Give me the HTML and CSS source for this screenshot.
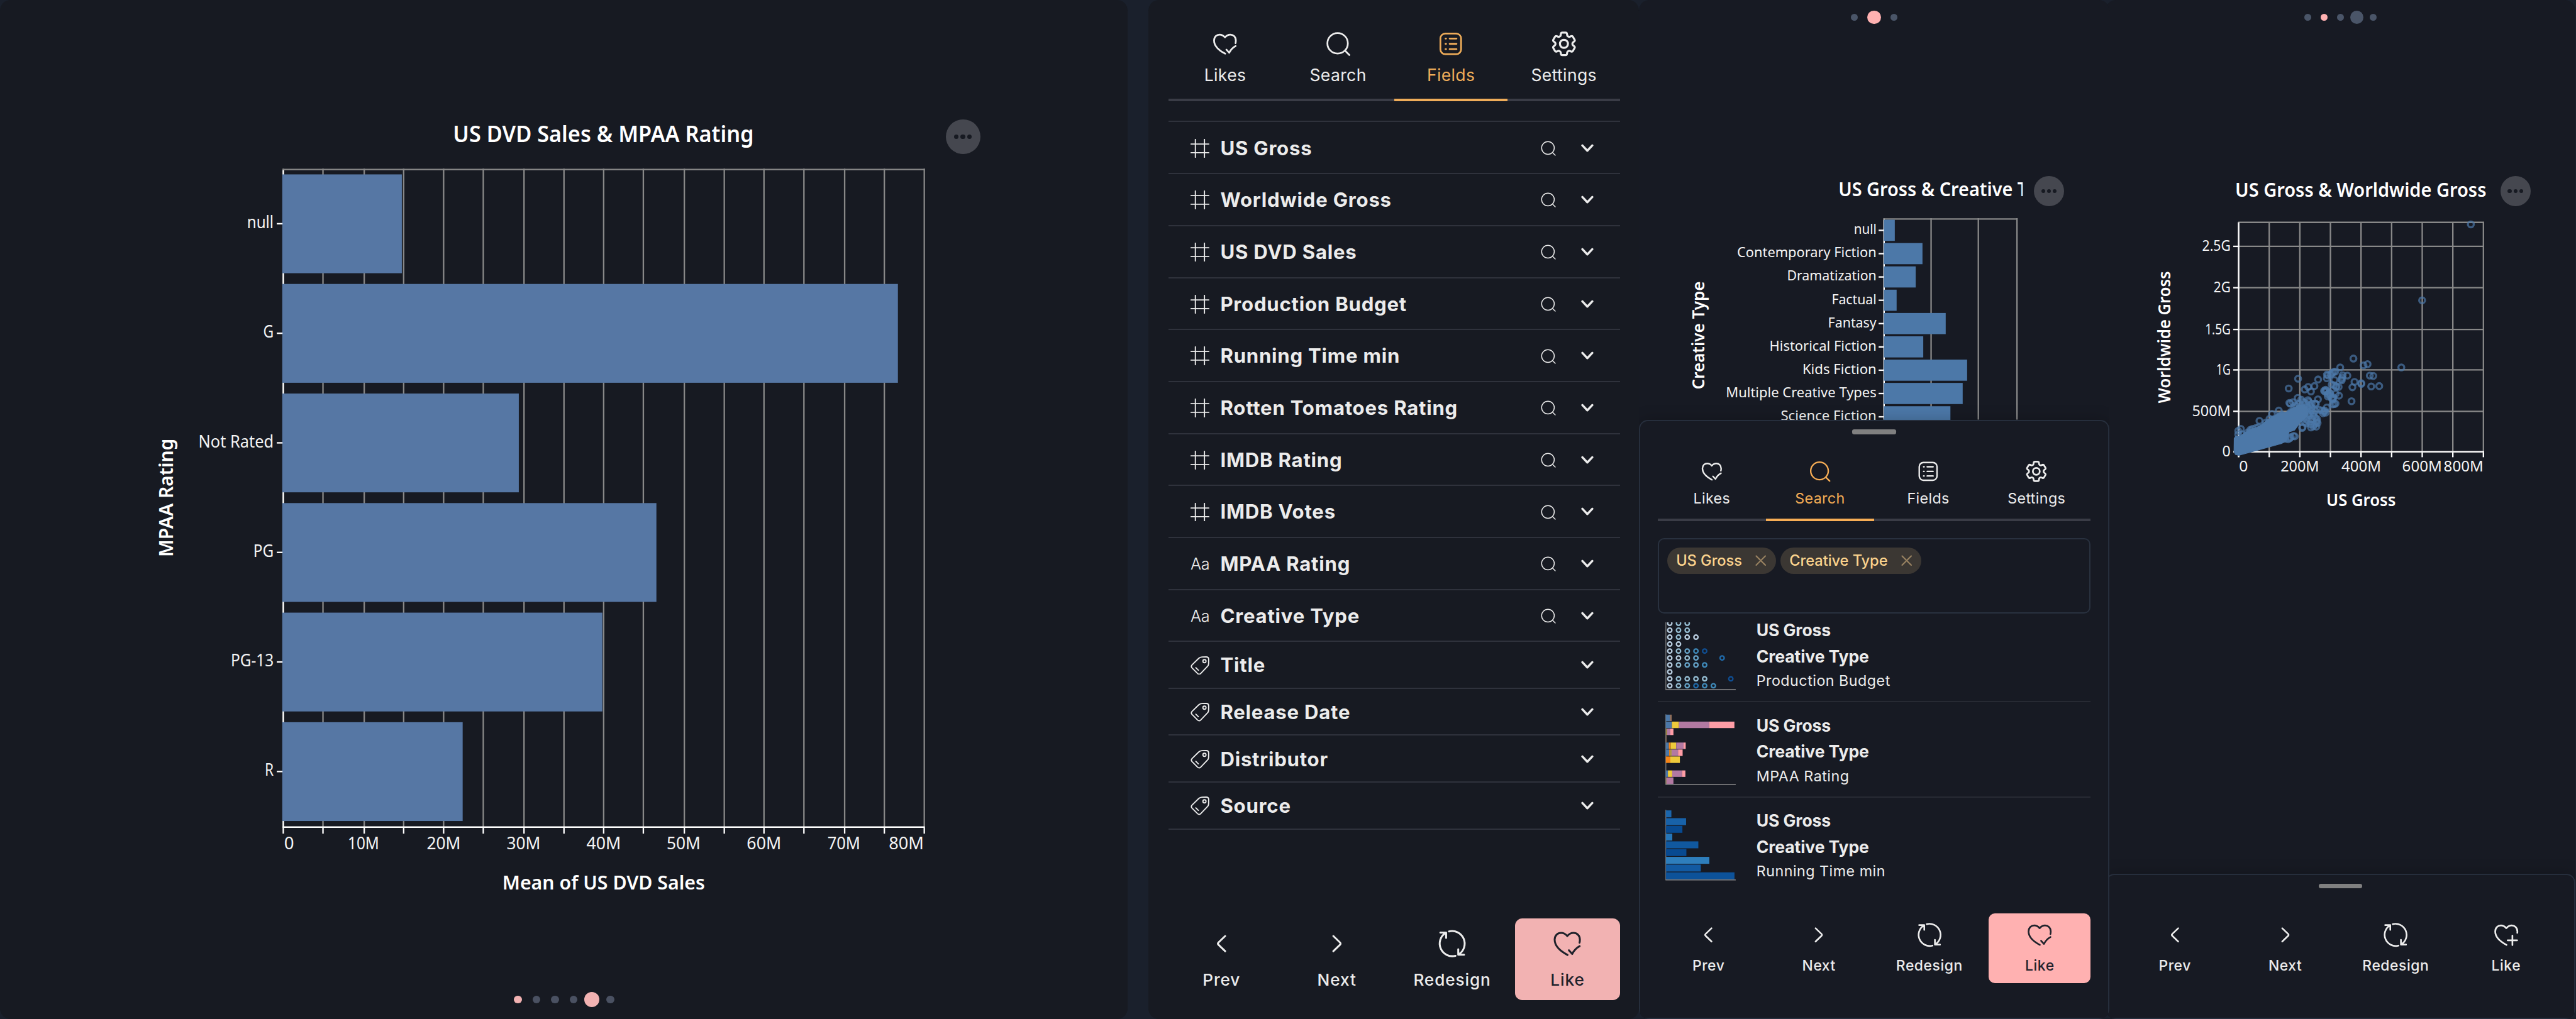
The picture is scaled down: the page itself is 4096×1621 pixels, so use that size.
FILE: index.html
```html
<!DOCTYPE html>
<html lang="en">
<head>
<meta charset="utf-8">
<title>Movies charts</title>
<link rel="stylesheet" href="styles.css">
</head>
<body>
<svg class="sprite" aria-hidden="true">
  <symbol id="i-heart-check" viewBox="0 0 24 24"><path d="M12.2 21C6.5 18 2 14.3 2 8.9 2 5.5 4.4 3.5 7.1 3.5 9.2 3.5 10.6 4.3 12 6 13.4 4.3 14.8 3.5 16.9 3.5 19.6 3.5 22 5.5 22 8.9c0 .9-.1 1.700-.3 2.400M13.300 17.300l2.600 2.900Q18 16 21.800 14"/></symbol>
  <symbol id="i-heart-plus" viewBox="0 0 24 24"><path d="M12.200 21C6.500 18 2 14.300 2 8.900 2 5.500 4.400 3.500 7.100 3.500 9.200 3.500 10.600 4.300 12 6 13.400 4.300 14.800 3.500 16.900 3.500 19.600 3.500 22 5.500 22 8.900c0 .5 0 .9-.1 1.300M17.500 12.600v8.600M13.200 16.900h8.600"/></symbol>
  <symbol id="i-search" viewBox="0 0 24 24"><circle cx="11.500" cy="11.500" r="9.400"/><path d="M18.400 18.400L22.300 22.300"/></symbol>
  <symbol id="i-list" viewBox="0 0 24 24"><rect x="2.500" y="2.500" width="19" height="19" rx="4.500"/><path d="M7.200 7.100h.5M11 7.100h6.300M7.200 12h.5M11 12h6.300M7.200 16.900h.5M11 16.900h6.300"/></symbol>
  <symbol id="i-gear" viewBox="1.600 1.600 20.800 20.800"><path d="M9.594 3.940c.09-.542.56-.94 1.110-.94h2.593c.55 0 1.020.398 1.110.94l.213 1.281c.063.374.313.686.645.87.074.04.147.083.22.127.325.196.72.257 1.075.124l1.217-.456a1.125 1.125 0 0 1 1.370.49l1.296 2.247a1.125 1.125 0 0 1-.26 1.431l-1.003.827c-.293.241-.438.613-.43.992a7.723 7.723 0 0 1 0 .255c-.008.378.137.75.43.991l1.004.827c.424.35.534.955.26 1.430l-1.298 2.247a1.125 1.125 0 0 1-1.369.491l-1.217-.456c-.355-.133-.75-.072-1.076.124a6.470 6.470 0 0 1-.22.128c-.331.183-.581.495-.644.869l-.213 1.281c-.09.543-.56.94-1.110.94h-2.594c-.55 0-1.019-.398-1.110-.94l-.213-1.281c-.062-.374-.312-.686-.644-.87a6.520 6.520 0 0 1-.22-.127c-.325-.196-.72-.257-1.076-.124l-1.217.456a1.125 1.125 0 0 1-1.369-.49l-1.297-2.247a1.125 1.125 0 0 1 .26-1.431l1.004-.827c.292-.24.437-.613.43-.991a6.932 6.932 0 0 1 0-.255c.007-.38-.138-.751-.43-.992l-1.004-.827a1.125 1.125 0 0 1-.26-1.430l1.297-2.247a1.125 1.125 0 0 1 1.370-.491l1.216.456c.356.133.751.072 1.076-.124.072-.044.146-.086.22-.128.332-.183.582-.495.644-.869l.214-1.280Z"/><circle cx="12" cy="12" r="3.200"/></symbol>
  <symbol id="i-left" viewBox="0 0 24 24"><path d="M15 6L9.700 11.100Q8.800 12 9.700 12.900L15 18"/></symbol>
  <symbol id="i-right" viewBox="0 0 24 24"><path d="M9 6L14.300 11.100Q15.200 12 14.300 12.900L9 18"/></symbol>
  <symbol id="i-redo" viewBox="0 0 24 24"><path d="M9.400 2.340A10 10 0 0 1 17.200 20.500M16.800 16.500v4.300h4.600M14.600 21.660A10 10 0 0 1 6.800 3.500M7.200 7.500V3.200H2.600"/></symbol>
  <symbol id="i-hash" viewBox="0 0 24 24"><path d="M6.200 .6V23.400M17.800 .6V23.400M.6 6.500H23.400M.6 17.600H23.400"/></symbol>
  <symbol id="i-tag" viewBox="0 0 24 24"><path d="M14.500 .9L20 .8Q23.200 .8 23.200 4L23.100 9.500Q23 11.500 21.600 13L13 21.900Q11 23.900 9 22L2 15Q.1 13 2 10.900L10.500 2.600Q12.200 1 14.500 .9ZM6.800 14.500l3.200 3.200"/><circle cx="17.800" cy="6.200" r="2"/></symbol>
  <symbol id="i-down" viewBox="0 0 24 24"><path d="M2.500 6.500L12 16.500 21.500 6.500"/></symbol>
  <symbol id="i-x" viewBox="0 0 24 24"><path d="M2 2L22 22M22 2L2 22"/></symbol>
</svg>

<main class="board">
  <section class="panel chart-panel">
    <svg class="chart" id="ratingChart" viewBox="0 0 2159 1952"></svg>
    <button class="more more-wide"><i></i><i></i><i></i></button>
    <div class="pager pager-bottom"><i class="liked"></i><i></i><i></i><i></i><i class="liked big"></i><i></i></div>
  </section>

  <section class="panel fields-panel">
    <nav class="tabs">
      <a class="tab"><svg class="icon"><use href="#i-heart-check"/></svg><span>Likes</span></a>
      <a class="tab"><svg class="icon"><use href="#i-search"/></svg><span>Search</span></a>
      <a class="tab active"><svg class="icon"><use href="#i-list"/></svg><span>Fields</span></a>
      <a class="tab"><svg class="icon"><use href="#i-gear"/></svg><span>Settings</span></a>
    </nav>
    <ul class="fields">
      <li><svg class="kind"><use href="#i-hash"/></svg><b>US Gross</b><svg class="find"><use href="#i-search"/></svg><svg class="open"><use href="#i-down"/></svg></li>
      <li><svg class="kind"><use href="#i-hash"/></svg><b>Worldwide Gross</b><svg class="find"><use href="#i-search"/></svg><svg class="open"><use href="#i-down"/></svg></li>
      <li><svg class="kind"><use href="#i-hash"/></svg><b>US DVD Sales</b><svg class="find"><use href="#i-search"/></svg><svg class="open"><use href="#i-down"/></svg></li>
      <li><svg class="kind"><use href="#i-hash"/></svg><b>Production Budget</b><svg class="find"><use href="#i-search"/></svg><svg class="open"><use href="#i-down"/></svg></li>
      <li><svg class="kind"><use href="#i-hash"/></svg><b>Running Time min</b><svg class="find"><use href="#i-search"/></svg><svg class="open"><use href="#i-down"/></svg></li>
      <li><svg class="kind"><use href="#i-hash"/></svg><b>Rotten Tomatoes Rating</b><svg class="find"><use href="#i-search"/></svg><svg class="open"><use href="#i-down"/></svg></li>
      <li><svg class="kind"><use href="#i-hash"/></svg><b>IMDB Rating</b><svg class="find"><use href="#i-search"/></svg><svg class="open"><use href="#i-down"/></svg></li>
      <li><svg class="kind"><use href="#i-hash"/></svg><b>IMDB Votes</b><svg class="find"><use href="#i-search"/></svg><svg class="open"><use href="#i-down"/></svg></li>
      <li><span class="kind letters">Aa</span><b>MPAA Rating</b><svg class="find"><use href="#i-search"/></svg><svg class="open"><use href="#i-down"/></svg></li>
      <li><span class="kind letters">Aa</span><b>Creative Type</b><svg class="find"><use href="#i-search"/></svg><svg class="open"><use href="#i-down"/></svg></li>
      <li class="short"><svg class="kind"><use href="#i-tag"/></svg><b>Title</b><svg class="open"><use href="#i-down"/></svg></li>
      <li class="short"><svg class="kind"><use href="#i-tag"/></svg><b>Release Date</b><svg class="open"><use href="#i-down"/></svg></li>
      <li class="short"><svg class="kind"><use href="#i-tag"/></svg><b>Distributor</b><svg class="open"><use href="#i-down"/></svg></li>
      <li class="short"><svg class="kind"><use href="#i-tag"/></svg><b>Source</b><svg class="open"><use href="#i-down"/></svg></li>
    </ul>
    <div class="actions">
      <button class="action"><svg class="icon"><use href="#i-left"/></svg><span>Prev</span></button>
      <button class="action"><svg class="icon"><use href="#i-right"/></svg><span>Next</span></button>
      <button class="action"><svg class="icon"><use href="#i-redo"/></svg><span>Redesign</span></button>
      <button class="action on"><svg class="icon"><use href="#i-heart-check"/></svg><span>Like</span></button>
    </div>
  </section>

  <section class="panel phone phone-search">
    <div class="canvas">
      <svg class="chart" id="typeChart" viewBox="3139 0 900 804"></svg>
      <button class="more"><i></i><i></i><i></i></button>
      <div class="pager"><i></i><i class="liked big"></i><i></i></div>
    </div>
    <div class="sheet">
      <div class="handle"></div>
      <nav class="tabs">
        <a class="tab"><svg class="icon"><use href="#i-heart-check"/></svg><span>Likes</span></a>
        <a class="tab active"><svg class="icon"><use href="#i-search"/></svg><span>Search</span></a>
        <a class="tab"><svg class="icon"><use href="#i-list"/></svg><span>Fields</span></a>
        <a class="tab"><svg class="icon"><use href="#i-gear"/></svg><span>Settings</span></a>
      </nav>
      <div class="query">
        <span class="chip chip-a"><em>US Gross</em><svg><use href="#i-x"/></svg></span>
        <span class="chip chip-b"><em>Creative Type</em><svg><use href="#i-x"/></svg></span>
      </div>
      <div class="results">
        <article><svg class="thumb" id="thumbBudget" viewBox="3189 1185.700 136 136"></svg><div><b>US Gross</b><b>Creative Type</b><span>Production Budget</span></div></article>
        <article><svg class="thumb" id="thumbRating" viewBox="3189 1368 136 136"></svg><div><b>US Gross</b><b>Creative Type</b><span>MPAA Rating</span></div></article>
        <article><svg class="thumb" id="thumbTime" viewBox="3189 1550.300 136 136"></svg><div><b>US Gross</b><b>Creative Type</b><span>Running Time min</span></div></article>
      </div>
      <div class="actions">
        <button class="action"><svg class="icon"><use href="#i-left"/></svg><span>Prev</span></button>
        <button class="action"><svg class="icon"><use href="#i-right"/></svg><span>Next</span></button>
        <button class="action"><svg class="icon"><use href="#i-redo"/></svg><span>Redesign</span></button>
        <button class="action on"><svg class="icon"><use href="#i-heart-check"/></svg><span>Like</span></button>
      </div>
    </div>
  </section>

  <section class="panel phone phone-scatter">
    <div class="canvas">
      <svg class="chart" id="grossChart" viewBox="4032 0 900 1674"></svg>
      <button class="more"><i></i><i></i><i></i></button>
      <div class="pager pager-five"><i></i><i class="liked"></i><i></i><i class="big"></i><i></i></div>
    </div>
    <div class="sheet">
      <div class="handle"></div>
      <div class="actions">
        <button class="action"><svg class="icon"><use href="#i-left"/></svg><span>Prev</span></button>
        <button class="action"><svg class="icon"><use href="#i-right"/></svg><span>Next</span></button>
        <button class="action"><svg class="icon"><use href="#i-redo"/></svg><span>Redesign</span></button>
        <button class="action"><svg class="icon"><use href="#i-heart-plus"/></svg><span>Like</span></button>
      </div>
    </div>
  </section>
</main>
<script src="charts.js"></script>
</body>
</html>
```
FILE: styles.css
```css
/* 1rem is ten design pixels of the 4933px wide board */
html { font-size: calc(100vw / 493.3); }
* { box-sizing: border-box; }
body {
  margin: 0;
  background: #1a202c;
  color: #ececec;
  font-family: Inter, "Liberation Sans", sans-serif;
  overflow: hidden;
}
ul { list-style: none; margin: 0; padding: 0; }
button { border: 0; background: none; color: inherit; font: inherit; padding: 0; }
.sprite { position: absolute; width: 0; height: 0; }
svg { fill: none; }
use, .icon, .kind, .find, .open, .chip svg {
  stroke: currentColor;
  stroke-linecap: round;
  stroke-linejoin: round;
}

.board { display: flex; width: 493.3rem; height: 100vh; }
.panel { position: relative; flex: none; background: #171a22; border-radius: 2rem; overflow: hidden; }
.chart-panel { width: 215.9rem; margin-right: 4rem; }
.fields-panel { width: 94rem; padding: 5.85rem 3.6rem 3.6rem 3.9rem; display: flex; flex-direction: column; }
.phone { width: 90rem; background: #171a23; display: flex; flex-direction: column; }
.phone-search { z-index: 1; }
.phone-scatter { margin-left: -.7rem; }
.canvas { position: relative; flex: none; }
.phone-search .canvas { height: 80.4rem; }
.phone-scatter .canvas { height: 167.4rem; }
.chart { display: block; width: 100%; height: 100%; }

/* chart drawing */
.chart text { font-family: "Noto Sans", sans-serif; fill: #f4f4f4; }
.chart .bold { font-weight: 600; fill: #fff; }
.grid { stroke: #888; stroke-width: 2.8; }
.axis { stroke: #fff; stroke-width: 2.8; }

/* page dots */
.pager { position: absolute; top: 1.95rem; left: 0; width: 100%; height: 2.8rem; display: flex; justify-content: center; align-items: center; gap: 2.43rem; }
.pager i { width: 1.32rem; height: 1.32rem; border-radius: 50%; background: #4a5568; }
.pager .liked { background: #ffb1b1; }
.pager .big { width: 2.55rem; height: 2.55rem; margin: 0 -.6rem; }
.pager-five { gap: 1.83rem; }
.pager-bottom { top: 190rem; gap: 2.04rem; }
.pager-bottom { width: 216.1rem; height: 3rem; }
.pager-bottom i { width: 1.5rem; height: 1.5rem; background: #4a5162; }
.pager-bottom .liked { background: #f2b2b2; }
.pager-bottom .big { width: 2.95rem; height: 2.95rem; margin: 0 -.72rem; }

/* overflow menu over a chart */
.more { position: absolute; top: 33.7rem; left: 75.6rem; width: 5.8rem; height: 5.8rem; border-radius: 50%; background: #45474f; display: flex; align-items: center; justify-content: center; gap: .35rem; }
.more i { width: .75rem; height: .75rem; border-radius: 50%; background: #171a22; }
.more-wide { top: 22.9rem; left: 181.1rem; width: 6.6rem; height: 6.6rem; gap: .37rem; }
.more-wide i { width: .9rem; height: .9rem; }

/* tabs */
.tabs { display: grid; grid-template-columns: repeat(4, 1fr); }
.tab { display: flex; flex-direction: column; align-items: center; gap: 1.53rem; padding-bottom: 2.52rem; border-bottom: 4px solid #3a3c46; font-size: 3.2rem; line-height: 4rem; letter-spacing: .013em; }
.tab .icon { width: 5rem; height: 5rem; stroke-width: 1.6; }
.tab.active { color: #eeac59; border-color: #eeac59; }

/* field list */
.fields { margin-top: 3.8rem; border-top: 2px solid #2f323c; }
.fields li { display: flex; align-items: center; height: 9.96rem; padding: .2rem 5.1rem 0 4.2rem; border-bottom: 2px solid #2f323c; }
.fields .short { height: 8.98rem; }
.fields b { flex: 1; font-size: 3.75rem; font-weight: 650; letter-spacing: .025em; }
.kind { width: 3.6rem; height: 3.6rem; margin-right: 2.1rem; stroke-width: 1.5; }
.letters { font-size: 3.05rem; font-weight: 300; line-height: 3.6rem; letter-spacing: -.02em; white-space: nowrap; }
.find { width: 3.1rem; height: 3.1rem; margin-right: 4.8rem; stroke-width: 1.4; }
.open { width: 2.4rem; height: 2.4rem; stroke-width: 4.2; }
.open { stroke-linecap: butt; }

/* action buttons */
.actions { display: grid; grid-template-columns: repeat(4, 1fr); gap: 1.86rem; margin-top: auto; }
.action { height: 15.7rem; padding-top: 1.95rem; display: flex; flex-direction: column; align-items: center; gap: 2.05rem; border-radius: 1.4rem; font-size: 3.15rem; line-height: 4rem; font-weight: 550; letter-spacing: .035em; }
.action .icon { width: 5.8rem; height: 5.8rem; stroke-width: 1.5; }
.action.on { background: #f2b2b2; color: #1f222b; }

/* bottom sheets of the phone panels */
.sheet { position: relative; flex: 1; display: flex; flex-direction: column; padding: 0 3.3rem; border: 2px solid #262e3c; border-radius: 1.7rem 1.7rem 0 0; background: #171a23; box-shadow: 0 0 3rem rgba(0, 0, 0, .22); }
.handle { flex: none; align-self: center; width: 8.4rem; height: .9rem; margin-top: 1.65rem; border-radius: .4rem; background: #808080; }
.sheet .tabs { margin-top: 4.95rem; }
.sheet .tab { gap: 1.23rem; padding-bottom: 2.05rem; font-size: 2.8rem; line-height: 3.6rem; letter-spacing: .016em; }
.sheet .tab .icon { width: 4.3rem; height: 4.3rem; }
.sheet .tab.active { color: #f6ad55; border-color: #f6ad55; }
.query { flex: none; height: 14.45rem; margin-top: 3.25rem; padding: 1.6rem; border: 2px solid #29313f; border-radius: 1.2rem; display: flex; align-items: flex-start; gap: .9rem; }
.chip { height: 5.06rem; padding: 0 1.85rem 0 1.7rem; border-radius: 2.53rem; display: flex; align-items: center; justify-content: space-between; background: #3b3733; color: #fbd38d; }
.chip-a { width: 20.8rem; }
.chip-b { width: 27rem; }
.chip em { font-style: normal; font-size: 2.85rem; font-weight: 500; letter-spacing: -.003em; white-space: nowrap; }
.chip svg { width: 2.1rem; height: 2.1rem; stroke-width: 2.8; color: #9b8462; }
.results { flex: none; height: 51rem; margin-top: 1.7rem; overflow: hidden; }
.results article { display: flex; gap: 3.8rem; height: 18.23rem; padding: 2rem 0 0 1.5rem; border-bottom: 2px solid #272a33; }
.results article:first-child { margin-top: -2.88rem; }
.results article:last-child { border: 0; }
.thumb { width: 13.6rem; height: 13.6rem; margin-top: .3rem; }
.results b, .results span { display: block; }
.results b { font-size: 3.2rem; line-height: 5rem; font-weight: 700; letter-spacing: -.004em; }
.results span { font-size: 2.8rem; line-height: 4.3rem; letter-spacing: .022em; }
.sheet .actions { gap: 1.66rem; margin-bottom: 6.6rem; }
.sheet .action { height: 13.36rem; padding-top: 1.5rem; gap: 1.7rem; border-radius: 1.2rem; font-size: 2.75rem; line-height: 3.6rem; letter-spacing: .025em; }
.sheet .action .icon { width: 5.1rem; height: 5.1rem; }
.sheet .action.on { background: #ffb1b1; }
```
FILE: charts.js
```js
const rect = (x, y, w, h, fill) => `<rect x="${x}" y="${y}" width="${w}" height="${h}" fill="${fill}"/>`;
const line = (x1, y1, x2, y2, cls) => `<line x1="${x1}" y1="${y1}" x2="${x2}" y2="${y2}" class="${cls}"/>`;
const text = (s, x, y, size, width, anchor, cls = '', extra = '') =>
  `<text x="${x}" y="${y}" font-size="${size}" textLength="${width}" lengthAdjust="spacingAndGlyphs" text-anchor="${anchor}" class="${cls}" ${extra}>${s}</text>`;
const vertical = (s, x, y, size, width) =>
  text(s, x, y, size, width, 'middle', 'bold', `transform="rotate(-90 ${x} ${y})"`);
const put = (id, parts) => { document.getElementById(id).innerHTML = parts.join(''); };

// Mean of US DVD Sales by MPAA Rating
{
  const out = [];
  const xs = [542.5, 618.5, 697.5, 773, 849.5, 925.5, 1003.5, 1080, 1156, 1232, 1310.5, 1387, 1463, 1539.5, 1617.5, 1693.5, 1770];
  xs.forEach(x => out.push(line(x, 323, x, 1585, 'grid'), line(x, 1585, x, 1597, 'axis')));
  out.push(line(541, 324.500, 1771, 324.500, 'grid'), line(542.500, 326, 542.500, 1585, 'axis'), line(541, 1584.500, 1771, 1584.500, 'axis'));
  [['null', 769.5, 51], ['G', 1719.5, 20], ['Not Rated', 993.5, 144], ['PG', 1257, 39], ['PG-13', 1153.5, 82], ['R', 886, 17]]
    .forEach(([name, end, width], i) => {
      const y = 334 + 209.9 * i;
      out.push(rect(540.5, y, end - 540.5, 189.3, '#5677a4'), line(530, y + 94.5, 541, y + 94.5, 'axis'));
      out.push(text(name, 524, y + 103, 32, width, 'end'));
    });
  out.push(text('0', 544, 1627, 32, 19, 'start'));
  [['10M', 696, 60], ['20M', 849.5, 65], ['30M', 1002.5, 65], ['40M', 1156, 66], ['50M', 1309, 65], ['60M', 1463, 66], ['70M', 1616, 63]]
    .forEach(([s, x, w]) => out.push(text(s, x, 1627, 32, w, 'middle')));
  out.push(text('80M', 1769, 1627, 32, 67, 'end'));
  out.push(text('US DVD Sales &amp; MPAA Rating', 1155.5, 272.5, 42.5, 576, 'middle', 'bold'));
  out.push(text('Mean of US DVD Sales', 1156, 1704, 36, 388, 'middle', 'bold'));
  out.push(vertical('MPAA Rating', 330.7, 953.5, 36, 227));
  put('ratingChart', out);
}

// US Gross by Creative Type
{
  const out = [];
  [3608.5, 3698.5, 3789, 3863].forEach(x => out.push(line(x, 418, x, 804, 'grid')));
  out.push(line(3607, 419.5, 3864, 419.5, 'grid'), line(3608.5, 421, 3608.5, 804, 'axis'));
  [['null', 3629, 43.5], ['Contemporary Fiction', 3682, 267], ['Dramatization', 3669, 171.5], ['Factual', 3632.5, 86], ['Fantasy', 3726.5, 93],
   ['Historical Fiction', 3683.5, 205], ['Kids Fiction', 3767.5, 142], ['Multiple Creative Types', 3759, 288.5], ['Science Fiction', 3735.5, 183.5]]
    .forEach(([name, end, width], i) => {
      const y = 421 + 44.66 * i;
      out.push(rect(3608, y, end - 3608, 40.5, '#4c78a8'), line(3598, y + 20.3, 3608, y + 20.3, 'axis'));
      out.push(text(name, 3594, y + 27.4, 26.8, width, 'end'));
    });
  out.push('<clipPath id="titleClip"><rect x="3500" y="320" width="374" height="80"/></clipPath>');
  out.push('<g clip-path="url(#titleClip)">' + text('US Gross &amp; Creative Type', 3521, 375.8, 36, 423, 'start', 'bold') + '</g>');
  out.push(vertical('Creative Type', 3263.8, 642.5, 32, 207));
  put('typeChart', out);
}

// US Gross against Worldwide Gross
{
  const out = [];
  for (let i = 0; i <= 8; i++) {
    const x = 4286.8 + 58.6 * i;
    out.push(line(x, 425, x, 865, 'grid'), line(x, 865, x, 876, 'axis'));
  }
  out.push(line(4286, 426, 4757, 426, 'grid'));
  [['0', 865.5, 16], ['500M', 788, 74], ['1G', 708.7, 27.5], ['1.5G', 631.2, 49], ['2G', 551.2, 32.5], ['2.5G', 472, 54.5]].forEach(([s, y, w]) => {
    out.push(line(4287, y, 4757, y, 'grid'), line(4276.5, y, 4287, y, 'axis'), text(s, 4271.5, y + 9, 27.5, w, 'end'));
  });
  out.push(line(4286.8, 426, 4286.8, 876, 'axis'), line(4286, 865.5, 4757, 865.5, 'axis'));
  out.push(text('0', 4287.5, 903, 27.5, 17, 'start'));
  [['200M', 4404, 74], ['400M', 4521.5, 76], ['600M', 4638, 76]].forEach(([s, x, w]) => out.push(text(s, x, 903, 27.5, w, 'middle')));
  out.push(text('800M', 4755.5, 903, 27.5, 76, 'end'));
  out.push(text('US Gross &amp; Worldwide Gross', 4520.7, 376.5, 36.5, 481, 'middle', 'bold'));
  out.push(text('US Gross', 4521.2, 969.5, 31.5, 133, 'middle', 'bold'));
  out.push(vertical('Worldwide Gross', 4155.5, 646, 32.5, 253));

  // marks in thirds of a pixel from the corner (4270, 600)
  const marks = [710,261,768,300,791,293,985,312,634,312,804,359,824,361,812,421,858,419,716,395,755,402,755,407,704,426,699,506,675,359,648,357,
    392,377,338,433,507,381,486,419,450,424,430,438,466,450,390,487,506,495,342,516,347,520,362,512,410,497,449,500,453,508,490,519,494,522,
    281,560,242,579,228,607,170,619,63,665,48,677,48,697,72,697,117,671,118,678,605,336,587,344,580,352,558,353,557,374,563,358,596,338,
    640,380,643,386,645,370,600,384,585,410,600,415,610,424,625,424,612,420,541,446,550,440,556,446,546,450,563,465,570,455,575,460,
    627,474,608,463,562,478,575,475,585,490,592,488,595,484,590,497,607,520,600,522,590,524,557,542,535,575,550,572,541,565,530,560,515,556,545,560,
    497,652,466,657,415,660,418,655,504,632,500,620,495,630,500,608,490,600,485,640,465,640,480,650,440,632,450,620,470,610,480,590,440,610,430,625,
    373,708,365,706,350,712,345,718,470,560,480,575,490,560,460,530,470,520,440,520,430,515,420,510,375,530,370,545,385,535,400,520,350,568,
    320,590,300,585,290,590,250,610,205,630,455,550,460,575,455,590,470,545,447,565,450,580,445,540,335,725,320,722,150,660,100,688,130,665,165,655,
    1384.5,-510,1104.5,-74];
  for (let i = 0; i < marks.length; i += 2) {
    out.push(`<circle cx="${4270 + marks[i] / 3}" cy="${600 + marks[i + 1] / 3}" r="5.6" stroke="#4c78a8" stroke-width="4" opacity=".7"/>`);
  }
  const crowd = [[25,720],[35,705],[60,707],[80,690],[115,668],[150,660],[185,640],[215,612],[240,600],[270,580],[300,572],[325,568],[350,552],[380,538],[400,525],[425,530],[445,540],[450,565],[445,590],[425,612],[405,628],[388,650],[372,672],[340,683],[335,700],[325,735],[295,750],[230,768],[150,790],[50,817],[32,812],[24,795]];
  out.push(`<polygon points="${crowd.map(([a, b]) => `${4270 + a / 3},${600 + b / 3}`).join(' ')}" fill="#4c78a8" stroke="#4c78a8" stroke-width="1.500" stroke-linejoin="round"/>`);
  put('grossChart', out);
}

// thumbnails of the search results
{
  const shades = { a: '#c6dbef', b: '#9ecae1', c: '#6baed6', d: '#4292c6', e: '#2171b5', f: '#0f529c' };
  const rows = ['abb', 'abb', 'abaa', 'aa', 'abcdf', 'aabc  e', 'abccd', 'a', 'abbbb  f', 'abcedd'];
  const out = [];
  rows.forEach((row, r) => [...row].forEach((k, c) => {
    if (k !== ' ') out.push(`<circle cx="${3197.5 + 16.7 * c}" cy="${1193.5 + 13.3 * r}" r="4" stroke="${shades[k]}" stroke-width="2.8" opacity=".92"/>`);
  }));
  const frame = y => [rect(3189.3, y - 134, 1.4, 134, '#888'), rect(3189.3, y - .7, 134.5, 1.8, '#888')];
  put('thumbBudget', [...out, ...frame(1320.3)]);

  const B = '#4c78a8', Y = '#eeca3b', P = '#b279a2', K = '#ff9da6', O = '#f58518', N = '#9d755d';
  const stacks = [[0, B, 116, N, 121], [1, B, 122, Y, 145, P, 244, K, 326], [2, '#a08a3a', 106, P, 117, K, 127], [3, N, 104],
    [4, B, 112, O, 118, Y, 136, P, 160, K, 167], [5, B, 113, O, 116, '#b5a04a', 121, P, 142, K, 157], [6, O, 117, Y, 148],
    [8, B, 109, Y, 123, P, 155, K, 166], [9, '#a99a45', 104, P, 127]];
  const bars = [];
  stacks.forEach(([row, ...segs]) => {
    let from = 102;
    for (let i = 0; i < segs.length; i += 2) {
      bars.push(rect(3130 + from * .5867, 1369 + 13.36 * row, (segs[i + 1] - from) * .5867, 12.4, segs[i]));
      from = segs[i + 1];
    }
  });
  put('thumbRating', [...frame(1502.4), ...bars]);

  const times = [[120, '#1b66ad'], [168, '#1862a9'], [156, '#084a91'], [123, '#2676b8'], [208, '#10589f'], [169, '#084a91'], [244, '#2e7ebc'], [216, '#125aa2'], [326, '#0d5299']];
  put('thumbTime', [...frame(1684.7), ...times.map(([end, c], i) => rect(3190, 1551.7 + 14.83 * i, (end - 102) * .5867, 13.3, c))]);
}
```
